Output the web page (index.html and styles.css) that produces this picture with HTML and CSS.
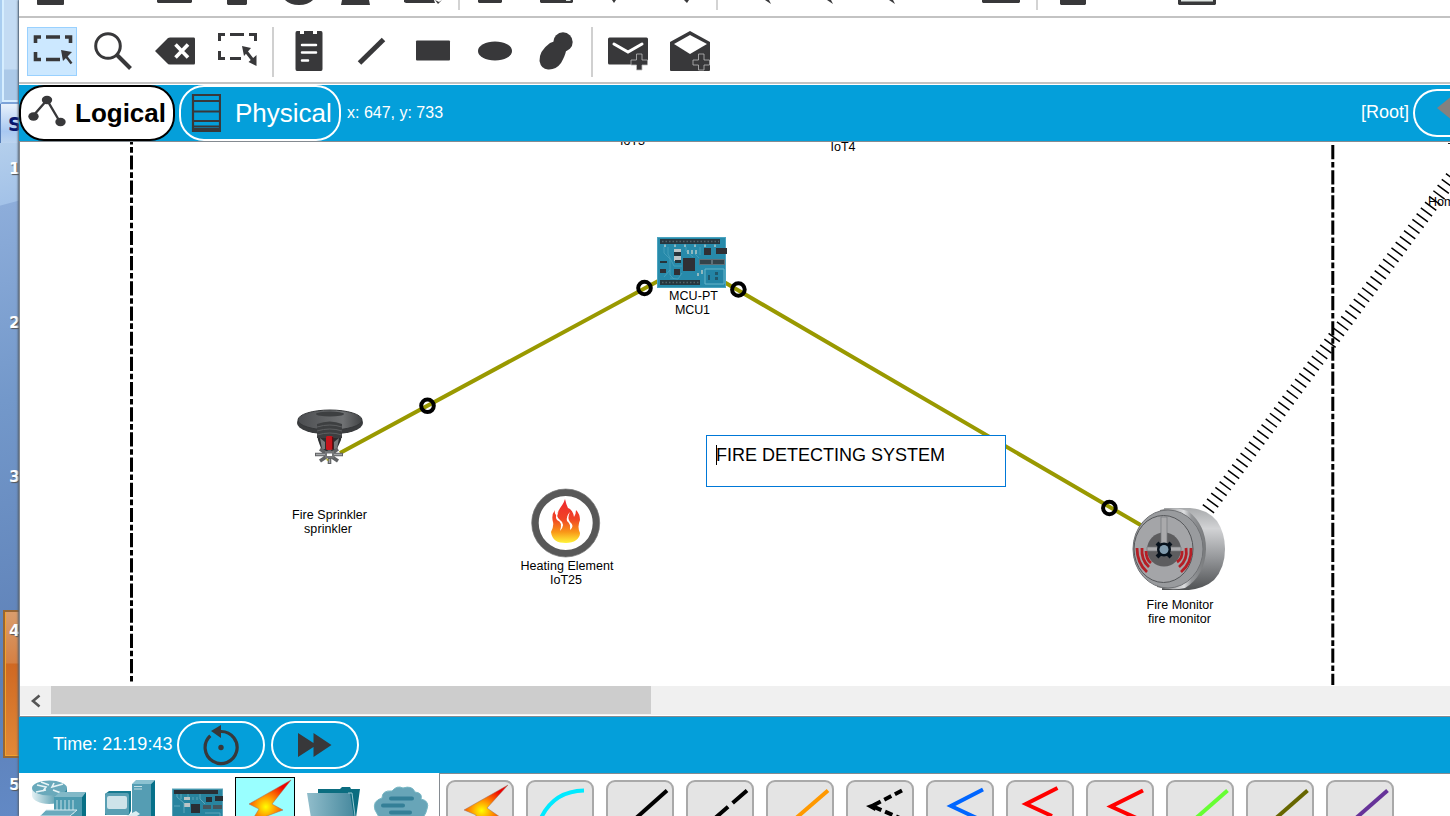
FILE: index.html
```html
<!DOCTYPE html>
<html lang="en">
<head>
<meta charset="utf-8">
<title>Network simulator</title>
<link rel="stylesheet" href="styles.css">
</head>
<body>
<div class="desktop">
<aside class="slides">
  <div class="slides-top"></div>
  <div class="slides-tab">S</div>
  <ol class="slide-list"><li>1</li><li>2</li><li>3</li><li class="current">4</li><li>5</li></ol>
</aside>
<main class="app">
  <div class="toolbar main-tools">
    <svg width="1431" height="16" viewBox="19 0 1431 16" fill="#38383a">
      <path d="M37 0H64V4Q64 5 63 5H38Q37 5 37 4ZM157 0H192V2L191 3H158L157 2ZM227 0H247V4L246 5H228L227 4ZM285 0H313Q308 5 299 5T285 0ZM342 0H369L370 5H341ZM404 0H434L435 3H406L404 2ZM435 0L438 4L442 0L439 2ZM478 0H502V2L501 3H479L478 2ZM540 0H573V2L572 3H541L540 2ZM612 0H616L614 3ZM684 0H689L687 3ZM765 0H769L771 4ZM827 0H831L833 4ZM889 0H893L895 4ZM982 0H1020V2L1019 3H983L982 2ZM1060 0H1086V4L1085 5H1061L1060 4ZM1178 0H1216V4L1215 5H1179L1178 4Z"/>
      <path d="M1181 0H1213V1.500H1181ZM566 0H570L571 1H566Z" fill="#dfe6e3"/>
      <path d="M459 0V10M717 0V10M1037 0V10" stroke="#cfcfcf" stroke-width="1.800"/>
    </svg>
  </div>
  <div class="toolbar edit-tools">
    <span class="tool active"><svg viewBox="27 27 50 49"><g fill="none" stroke="#38383a" stroke-width="3.600"><path d="M35.500 43V37H41M46 37H60M65 37H70.500V43M35.500 52V59.500H41M46 59.500H60"/><path d="M65 55L71.500 63.500" stroke-width="2.400"/></g><path d="M61 50L72 52L63 61Z" fill="#38383a"/></svg></span>
    <span class="tool"><svg viewBox="89 27 50 49"><circle cx="108" cy="46" r="12.300" fill="none" stroke="#38383a" stroke-width="3"/><path d="M116.500 54.500L130.500 68.500" stroke="#38383a" stroke-width="4"/></svg></span>
    <span class="tool"><svg viewBox="151 27 50 49"><path d="M155 51L168 38Q169 37.500 170 37.500H194Q195 37.500 195 39V63Q195 64.500 194 64.500H170Q168 64.500 167 63Z" fill="#38383a"/><path d="M175.500 44.500L188 57.500M188 44.500L175.500 57.500" stroke="#fff" stroke-width="3.600"/></svg></span>
    <span class="tool"><svg viewBox="213 27 50 49"><g fill="none" stroke="#38383a" stroke-width="3"><path d="M219.500 41V34.500H225M230 34.500H244M249 34.500H255.500V41M219.500 51V58.500H225M230 58.500H241M245 50L255 63"/></g><path d="M242 46L251 48L244 56ZM256.500 66L256.500 55L248.500 62Z" fill="#38383a"/></svg></span>
    <i class="sep"></i>
    <span class="tool"><svg viewBox="284 27 50 49"><path d="M296 31H300V34H304V31H313V34H317V31H321Q322.500 31 322.500 33V69Q322.500 71 321 71H297Q295.500 71 295.500 69V33Q295.500 31 297 31Z" fill="#38383a"/><path d="M302 45H316M302 52.500H316M302 60.500H308" stroke="#fff" stroke-width="2.500" stroke-linecap="round"/></svg></span>
    <span class="tool"><svg viewBox="346 27 50 49"><path d="M359.500 63L383.500 39.500" stroke="#38383a" stroke-width="5"/></svg></span>
    <span class="tool"><svg viewBox="408 27 50 49"><rect x="416" y="40.500" width="34" height="20" rx="1" fill="#38383a"/></svg></span>
    <span class="tool"><svg viewBox="470 27 50 49"><ellipse cx="495" cy="51" rx="17" ry="9.500" fill="#38383a"/></svg></span>
    <span class="tool"><svg viewBox="532 27 50 49" fill="#38383a"><circle cx="563" cy="42" r="9.700"/><path d="M550 43Q555 40 562 43L566 51Q565 56 561 63Q556 70 548 69.500Q541 69 539.500 61Q539 51 550 43Z"/></svg></span>
    <i class="sep"></i>
    <span class="tool"><svg viewBox="604 27 50 49"><rect x="609" y="37.500" width="40" height="27" rx="1.500" fill="#38383a"/><path d="M615 44L629 52L643 44" fill="none" stroke="#fff" stroke-width="3" stroke-linecap="round"/><path d="M637.500 54H643V60H648.500V65H643V70H637.500V65H632V60H637.500Z" fill="#38383a" stroke="#bbb" stroke-width=".8"/></svg></span>
    <span class="tool"><svg viewBox="666 27 50 49"><path d="M671 42L691 31L711 42V70Q711 71 710 71H672Q671 71 671 70Z" fill="#38383a"/><path d="M675 44L691 35L708 44L691 54Z" fill="#fff"/><path d="M699.500 54H705V60H710.500V65H705V70H699.500V65H694V60H699.500Z" fill="#38383a" stroke="#bbb" stroke-width=".8"/></svg></span>
  </div>
  <div class="viewbar">
    <span class="pill logical"><svg width="40" height="34" viewBox="27 94 40 34"><path d="M33 115L47 99L60 121" fill="none" stroke="#38383a" stroke-width="2.400"/><g fill="#38383a"><ellipse cx="47" cy="99" rx="5.200" ry="4.200"/><ellipse cx="33.500" cy="115.500" rx="5.200" ry="4.200"/><ellipse cx="60.500" cy="121" rx="5.200" ry="4.200"/></g></svg><b>Logical</b></span>
    <span class="pill physical"><svg width="30" height="40" viewBox="191 93 30 40"><path d="M193 95H220V131H193ZM193 101H220M193 111.500H220M193 121H220M193 126.500H220M193 129H220" fill="none" stroke="#38383a" stroke-width="2.200"/></svg><span>Physical</span></span>
    <span class="coords">x: 647, y: 733</span>
    <span class="root">[Root]</span>
    <span class="back"><svg width="24" height="30" viewBox="0 0 24 30"><path d="M0 12L15 0V24Z" fill="#85817f"/></svg></span>
  </div>
  <section class="canvas">
    <svg class="topology" viewBox="20 142 1430 544">
      <defs>
        <linearGradient id="fire" x2="0" y2="1"><stop stop-color="#ee2730"/><stop offset=".45" stop-color="#f04325"/><stop offset=".75" stop-color="#f99718"/><stop offset="1" stop-color="#fff43a"/></linearGradient>
        <linearGradient id="metal"><stop stop-color="#6a6b6d"/><stop offset=".55" stop-color="#dddee0"/><stop offset=".7" stop-color="#949699"/><stop offset="1" stop-color="#77797b"/></linearGradient>
        <linearGradient id="plate"><stop stop-color="#4b4d50"/><stop offset=".7" stop-color="#707274"/><stop offset="1" stop-color="#414345"/></linearGradient>
        <linearGradient id="shade" x2="0" y2="1"><stop stop-color="#a9abad"/><stop offset=".25" stop-color="#d2d3d5"/><stop offset=".6" stop-color="#97999c"/><stop offset="1" stop-color="#505254"/></linearGradient>
      </defs>
      <g stroke="#000" stroke-width="3" stroke-dasharray="14.2 2.700 5.600 2.680">
        <path d="M131.500 142V684" stroke-dashoffset="11.800"/>
        <path d="M1332.800 145V685"/>
      </g>
      <path d="M1208 509.300L1454 174.500" stroke="#000" stroke-width="14" stroke-dasharray="1.500 5.580"/>
      <path d="M340 453L661 279.500M724 282L1144 527" stroke="#999900" stroke-width="4"/>
      <g fill="none" stroke="#000" stroke-width="4"><circle cx="644.500" cy="288" r="6.300"/><circle cx="738.400" cy="289.500" r="6.300"/><circle cx="427.500" cy="405.800" r="6.300"/><circle cx="1109.400" cy="508" r="6.300"/></g>
      <!-- microcontroller board -->
      <g>
        <rect x="657.500" y="237.500" width="68" height="50" fill="#278aaa" stroke="#4ca4c0"/>
        <path d="M660 239H720V244H660ZM660 280H700V285H660Z" fill="#27363e"/>
        <path d="M662 241.500H719M662 282.500H699" stroke="#53636a" stroke-width="1.500" stroke-dasharray="1.500 2"/>
        <path d="M683 258H695V271H683ZM704 248H711V255H704ZM674 269H680V275H674ZM716 248H727V254H716ZM660 269H666V273H660Z" fill="#303035"/>
        <path d="M699 259H725V265H699Z" fill="#5f7078"/><path d="M700 260H711V264H700ZM713 260H724V264H713Z" fill="#34434a"/>
        <path d="M674 249H681V253H674ZM674 255H681V261H674Z" fill="#bdc5c7"/><path d="M674 252H681V256H674ZM675 260H681V263H675ZM660 261H667V263H660Z" fill="#26343b"/>
        <path d="M664 247V253L670 259V275L674 279M668 247V254L674 266H682M686 247V251L693 257M695 254L699 258M670 278L678 279L682 273M700 247V255M664 277L670 270" fill="none" stroke="#4ba2bc" stroke-width=".8"/>
        <path d="M705 269H724V284H705Z" fill="#2384a5" stroke="#68b5ca"/><path d="M708 275H710V280H708ZM715 272H718V275H715ZM715 277H718V280H715Z" fill="#20576b"/><path d="M688 250V254M692 250V254M696 250V254M698 273V276M702 270V274M665 244.500V247M675 244.500V247M685 244.500V247M695 244.500V247M705 244.500V247M715 244.500V247" stroke="#d5d7ce" stroke-width="1.200"/>
      </g>
      <!-- sprinkler -->
      <g>
        <path d="M316 426H343L341 440L336 451H322L318 440Z" fill="#2c2e30"/>
        <ellipse cx="330" cy="423" rx="33" ry="11.500" fill="#3a3c3e"/><ellipse cx="330" cy="420" rx="32" ry="10" fill="url(#plate)" stroke="#353739"/>
        <ellipse cx="330" cy="414" rx="14" ry="2.500" fill="#3d3f41"/>
        <path d="M317 424Q330 419 342 424V438H317Z" fill="#3d3f41"/><path d="M317 427Q330 423 342 427M317 431Q330 427 342 431M317 435Q330 431 342 435" fill="none" stroke="#5d5f61"/>
        <path d="M320 438L325 442V449H322ZM339 438L334 442V449H337Z" fill="#777a7c"/>
        <rect x="326" y="436" width="7" height="14" rx="2" fill="#c5161d"/><path d="M332.500 437V449" stroke="#650b0e" stroke-width="1.500"/>
        <path d="M315 454.500H343M320 449L338 461M338 449L320 461M329.500 446V464" stroke="#606264" stroke-width="3.600"/>
        <path d="M316 454.500H342M329.500 459V463" stroke="#a5a7a8" stroke-width="1.300"/><rect x="326" y="436" width="6" height="14" rx="2" fill="#c5161d"/><path d="M325 451H334V458H325Z" fill="#737577"/><path d="M327 453.500H332V456H327Z" fill="#fff"/><path d="M326 458L329 460L327 461Z" fill="#aaa51b"/>
      </g>
      <!-- heating element -->
      <circle cx="565.700" cy="523" r="30.500" fill="#fff" stroke="#585858" stroke-width="7"/><circle cx="565.700" cy="523" r="34" fill="none" stroke="#777" stroke-width=".7"/>
      <path d="M565 499C563 506 557 510 557 516Q554 514 555 510Q551 515 553 522Q554 526 551 532C552 540 557 543 566 543C574 543 580 539 580 533Q577 527 580 520Q580 514 576 510Q576 514 574 517Q573 510 568 508Q566 504 565 499Z" fill="url(#fire)"/>
      <path d="M559 511Q555 516 560 520Q566 524 560 531Q563 522 557 520Q554 515 559 511ZM570 512Q567 518 570 522Q575 526 570 530Q571 524 567 521Q566 516 570 512Z" fill="#fff"/>
      <!-- fire monitor -->
      <g>
        <path d="M1164 508H1190Q1207 509 1217 521Q1225 533 1225 549Q1225 568 1214 580Q1205 588 1189 590H1162Z" fill="url(#shade)"/>
        <path d="M1160 510Q1173 506 1188 511Q1206 525 1206 549Q1205 576 1185 588Q1171 591 1157 587Z" fill="url(#metal)"/>
        <ellipse cx="1168" cy="549" rx="35" ry="39" fill="#999b9e" stroke="#717376"/>
        <ellipse cx="1163.500" cy="549" rx="29.500" ry="33.500" fill="#a4a5a8" stroke="#55575a"/>
        <circle cx="1164" cy="549.500" r="17" fill="#5d5d5f"/>
        <path d="M1161 517H1167V547H1161ZM1147 547H1160V551H1147ZM1168 547H1181V551H1168Z" fill="#aaaaac" stroke="#77797b" stroke-width=".7"/>
        <circle cx="1164" cy="549.500" r="7" fill="#07111b"/><path d="M1157 543L1171 557M1171 543L1157 557" stroke="#07111b" stroke-width="4"/><circle cx="1164" cy="549.500" r="4.500" fill="#819bad"/>
        <path d="M1137 548Q1137 563 1147 572M1142 548Q1141 560 1149 567M1146 551Q1146 559 1151 563M1191 548Q1192 563 1181 572M1186 548Q1188 560 1179 567M1182 551Q1183 558 1177 562" fill="none" stroke="#b51e25" stroke-width="2.800"/>
      </g>
      <g class="labels">
        <text x="693.500" y="299.700" textLength="49">MCU-PT</text><text x="692.500" y="313.700" textLength="35">MCU1</text>
        <text x="329.500" y="518.700" textLength="75">Fire Sprinkler</text><text x="328" y="532.700" textLength="48">sprinkler</text>
        <text x="567" y="569.700" textLength="93">Heating Element</text><text x="566" y="583.700" textLength="32">IoT25</text>
        <text x="1180" y="608.700" textLength="67">Fire Monitor</text><text x="1179.500" y="622.700" textLength="63">fire monitor</text>
        <text x="632.500" y="144.500" textLength="25">IoT3</text><text x="843" y="151" textLength="25">IoT4</text><text x="1428" y="205.700" style="text-anchor:start">Home</text>
      </g>
      <path d="M1448 143.500H1450" stroke="#222"/>
    </svg>
    <div class="note"><i></i><span>FIRE DETECTING SYSTEM</span></div>
  </section>
  <div class="scrollbar"><span class="arrow"><svg width="12" height="14" viewBox="0 0 12 14"><path d="M10.500 1.500L4 7L10.500 12.500" fill="none" stroke="#555" stroke-width="2.600"/></svg></span><span class="thumb"></span></div>
  <div class="timebar">
    <span class="time">Time: 21:19:43</span>
    <span class="round"><svg viewBox="177 721 88 48"><path d="M210.300 735.700A16 16 0 1 0 221 731.500" fill="none" stroke="#38383a" stroke-width="3.200"/><path d="M211 731L221 725V738Z" fill="#38383a"/><circle cx="221" cy="747.500" r="2.700" fill="#38383a"/></svg></span>
    <span class="round"><svg viewBox="271 721 88 48"><path d="M298 733L313.500 743V733L331.500 745L313.500 757V747L298 757Z" fill="#38383a"/></svg></span>
  </div>
  <footer class="palette">
    <div class="devices">
      <svg viewBox="30 777 60 39"><defs><linearGradient id="teal"><stop stop-color="#e3f1f4"/><stop offset="1" stop-color="#257e96"/></linearGradient></defs><path d="M32 788V796Q34 803 49 804Q65 803 67 796V788Z" fill="url(#teal)"/><ellipse cx="49.500" cy="788" rx="17.500" ry="7.500" fill="#69a9bb"/><path d="M37 785L46 787L43 791M63 784L52 787L54 783M36 792L46 790M53 790L61 793M41 782L49 785" fill="none" stroke="#e7f4f6" stroke-width="1.600"/><path d="M54 797L60 792H86L82 797Z" fill="#82b9c8"/><path d="M54 797H82V816H54Z" fill="#4d9bb0"/><path d="M82 797L86 792V816H82Z" fill="#087086"/><path d="M57 800V814M61 800V814M65 800V814M69 800V814M73 800V814" stroke="#c6e0e7"/><path d="M40 816L46 810H77L70 816Z" fill="#69aabd" stroke="#d7eaf0"/></svg>
      <svg viewBox="102 777 60 39"><path d="M132 784L136 780H155L151 784Z" fill="#8cc2d1"/><path d="M132 784H151V816H132Z" fill="#559db3"/><path d="M151 784L155 780V816H151Z" fill="#07718a"/><path d="M134 786.500H142M134 789H142" stroke="#c6e0e6"/><path d="M105 794L109 791H131V811L129 815H105Z" fill="#16798f"/><rect x="105" y="793" width="24" height="22" rx="2" fill="#599fb3"/><rect x="107" y="796" width="20" height="13" rx="2" fill="#cee3e9"/><path d="M126 816L136 811L140 814L137 816Z" fill="#d9eef2"/></svg>
      <svg viewBox="170 777 60 39"><rect x="172.500" y="789" width="50" height="30" fill="#28849f" stroke="#5da4b8"/><path d="M174 790H218V794H174ZM191 804H200V813H191ZM206 797H212V802H206ZM215 796H223V801H215Z" fill="#292f35"/><path d="M184 797H190V800H184ZM184 803H190V807H184Z" fill="#bbc4c6"/><path d="M203 805H211V809H203ZM213 805H222V809H213Z" fill="#45555d"/><path d="M177 794V797L184 803V813M181 794V799M188 794V797M200 794V799L205 804M193 797V800M197 797V800M174 806H180M205 813H220V816" fill="none" stroke="#69afc2" stroke-width=".8"/></svg>
      <svg class="picked" viewBox="235 777 60 39"><defs><radialGradient id="spark" cx=".4" cy=".64" r=".62"><stop stop-color="#ffff00"/><stop offset=".45" stop-color="#ff8800"/><stop offset="1" stop-color="#f00000"/></radialGradient></defs><rect x="235.500" y="777.500" width="59" height="50" fill="#99ffff" stroke="#000"/><path d="M291 780L249 804L259 809L251 822L283 810L272 804Z" fill="url(#spark)" stroke="#a06a5b" stroke-width=".5"/></svg>
      <svg viewBox="304 777 60 39"><path d="M318 789H340L342 787H350L351 789H360L356 818H318Z" fill="#0b6d80"/><path d="M307 793H350L354 818H311Z" fill="url(#folder)"/><defs><linearGradient id="folder"><stop stop-color="#91bdcb"/><stop offset="1" stop-color="#47899e"/></linearGradient></defs><path d="M348 793H352L355 816" fill="none" stroke="#9ac8d1"/></svg>
      <svg viewBox="372 777 60 39"><path d="M375 810Q372 801 382 798Q382 790 392 791Q397 785 403 788Q412 785 415 792Q423 793 421 799Q430 801 427 809Q425 818 419 819H380Z" fill="#68a5b8" stroke="#79b8c5"/><path d="M391 798.500H412M383 805.500H403M391 812.500H410" stroke="#347f97" stroke-width="4" stroke-linecap="round"/></svg>
    </div>
    <div class="cables">
      <span><svg viewBox="446 780 68 36"><path d="M508 785L464 810L476 815L474 825L500 817L487 808Z" fill="url(#spark)" stroke="#997060" stroke-width=".5"/></svg></span>
      <span><svg viewBox="526 780 68 36"><path d="M541 818Q554 791 584 790.500" fill="none" stroke="#00eaff" stroke-width="4"/></svg></span>
      <span><svg viewBox="606 780 68 36"><path d="M635 819L667 790.500" stroke="#000" stroke-width="4"/></svg></span>
      <span><svg viewBox="686 780 68 36"><path d="M747 790.500L714 819" stroke="#000" stroke-width="4" stroke-dasharray="19 6"/></svg></span>
      <span><svg viewBox="766 780 68 36"><path d="M795 819L828 790.500" stroke="#ff9900" stroke-width="4"/></svg></span>
      <span><svg viewBox="846 780 68 36"><path d="M902 790.500L872 806L902 819" fill="none" stroke="#000" stroke-width="4" stroke-dasharray="8 4"/><path d="M866 806L877 802L875 811Z"/></svg></span>
      <span><svg viewBox="926 780 68 36"><path d="M983 789.500L951 806L983 821" fill="none" stroke="#0066ff" stroke-width="4"/></svg></span>
      <span><svg viewBox="1006 780 68 36"><path d="M1057.500 788L1026 804L1052 816" fill="none" stroke="#ff0000" stroke-width="4"/></svg></span>
      <span><svg viewBox="1086 780 68 36"><path d="M1143 790.500L1111 806.500L1143 821" fill="none" stroke="#ff0000" stroke-width="4"/></svg></span>
      <span><svg viewBox="1166 780 68 36"><path d="M1195 819L1227.500 790.500" stroke="#66ff33" stroke-width="4"/></svg></span>
      <span><svg viewBox="1246 780 68 36"><path d="M1275 819L1307.500 790.500" stroke="#666600" stroke-width="4"/></svg></span>
      <span><svg viewBox="1326 780 68 36"><path d="M1355 819L1387.500 790.500" stroke="#663399" stroke-width="4"/></svg></span>
    </div>
  </footer>
</main>
</div>
</body>
</html>
```
FILE: styles.css
```css
* { box-sizing: border-box; }
body { margin: 0; width: 1450px; height: 816px; overflow: hidden; font-family: "Liberation Sans", Arial, sans-serif; }
svg { display: block; }
.desktop { display: flex; height: 816px; }

.slides { width: 19px; flex: none; overflow: hidden; display: flex; flex-direction: column; background: #6f94cd; }
.slides-top { height: 104px; border-left: 2px solid #a9cdf0; border-right: 1px solid #84a9d1; border-bottom: 2px solid #7ba3d8; background: linear-gradient(#c3dbf3 0 69px, #abc9e8 70px); box-shadow: inset 2px -2px #d6eeff; }
.slides-tab { height: 39px; padding: 8px 0 0 7px; border-left: 1px solid #547db9; background: linear-gradient(#e7f1fb, #a8c8f2 70%, #bcd4ef); color: #07166f; font: bold 19px/24px "DejaVu Sans", sans-serif; }
.slide-list { margin: 0; padding: 0; list-style: none; height: 673px; background: linear-gradient(165deg, #b4cfec 0, #a3c2e8 60px, #8dadda 61px, #7398ca 250px, #5d80b7 520px, #6289c5); color: #fff; font: bold 16px/18px "DejaVu Sans", sans-serif; text-shadow: 1px 1px 1px #555; }
.slide-list li { height: 154px; padding: 17px 0 0 9px; }
.slide-list .current { height: 148px; margin: 5px 0 1px 3px; padding: 10px 0 0 4px; border: 2px solid #986633; border-right: 0; background: linear-gradient(#d99d6d, #d58043 51px, #cf6822 52px, #e18938); box-shadow: inset 1px -1px #f4a22a; }

.app { width: 1431px; flex: none; display: flex; flex-direction: column; overflow: hidden; background: #fff; box-shadow: -1px 0 2px #56616f; }
.toolbar { flex: none; border-bottom: 2px solid #c3c3c3; display: flex; }
.main-tools { height: 18px; }
.edit-tools { height: 66px; padding: 9px 0 0 8px; gap: 12px; align-items: flex-start; }
.tool { width: 50px; height: 49px; flex: none; }
.tool.active { background: #cce8ff; outline: 1px solid #99d1ff; outline-offset: -1px; }
.sep { width: 2px; height: 50px; margin: 0 -2px 0 -3px; background: #d0d0d0; }

.viewbar { height: 58px; flex: none; padding-top: 1px; border-bottom: 1px solid #858b91; background: linear-gradient(#fff 1px, #049fda 1px); display: flex; align-items: center; color: #fff; }
.pill { height: 56px; border-radius: 25px; display: flex; align-items: center; font-size: 26px; white-space: nowrap; }
.logical { width: 156px; border: 2px solid #000; background: #fff; color: #000; padding-left: 6px; gap: 8px; }
.logical svg { margin-top: -3px; }
.physical { width: 162px; margin-left: 4px; border: 2px solid #fff; padding-left: 10px; gap: 14px; }
.coords { margin: 0 0 1px 6px; font-size: 16px; }
.root { margin: 0 4px 1px auto; font-size: 18px; }
.back { width: 37px; height: 48px; border: 2px solid #fff; border-right: 0; border-radius: 24px 0 0 24px; padding: 5px 0 0 22px; overflow: hidden; }

.canvas { height: 544px; flex: none; position: relative; border-left: 1px solid #838b94; overflow: hidden; }
.topology { width: 1430px; height: 544px; }
.labels { font-size: 12.500px; text-anchor: middle; }
.note { position: absolute; left: 686px; top: 293px; width: 300px; height: 52px; border: 1px solid #0078d7; background: #fff; display: flex; padding: 9px 0 0 9px; font-size: 18px; line-height: 20px; white-space: nowrap; }
.note i { width: 1px; height: 20px; margin-right: -1px; background: #000; }

.scrollbar { height: 31px; flex: none; display: flex; background: #f0f0f0; border-left: 1px solid #838b94; border-bottom: 1px solid #858b91; box-shadow: inset 0 -1px #fff; }
.arrow { width: 31px; padding: 8px 0 0 9px; }
.thumb { width: 600px; height: 28px; background: #cdcdcd; }
.timebar { height: 56px; flex: none; background: #049fda; display: flex; align-items: center; padding-left: 34px; color: #fff; font-size: 18px; }
.time { width: 124px; margin-bottom: 2px; white-space: nowrap; }
.round { width: 88px; height: 48px; margin-right: 6px; border: 2px solid #fff; border-radius: 24px; }
.round svg { width: 88px; height: 48px; margin: -2px; }

.palette { height: 43px; flex: none; display: flex; }
.devices { width: 421px; flex: none; border-right: 1px solid #858b91; padding: 4px 0 0 11px; display: flex; }
.devices svg { width: 60px; height: 39px; flex: none; margin-right: 8px; }
.devices svg:first-child { margin-right: 12px; }
.devices svg:nth-child(3) { margin-right: 5px; }
.devices .picked { margin-right: 9px; }
.cables { flex: 1; border-top: 1px solid #858b91; padding: 6px 0 0 6px; display: flex; gap: 12px; overflow: hidden; }
.cables span { width: 68px; height: 60px; flex: none; border: 2px solid #a9a9a9; border-radius: 9px; background: #e4e4e4; }
.cables svg { width: 68px; height: 36px; margin: -2px; }
```
